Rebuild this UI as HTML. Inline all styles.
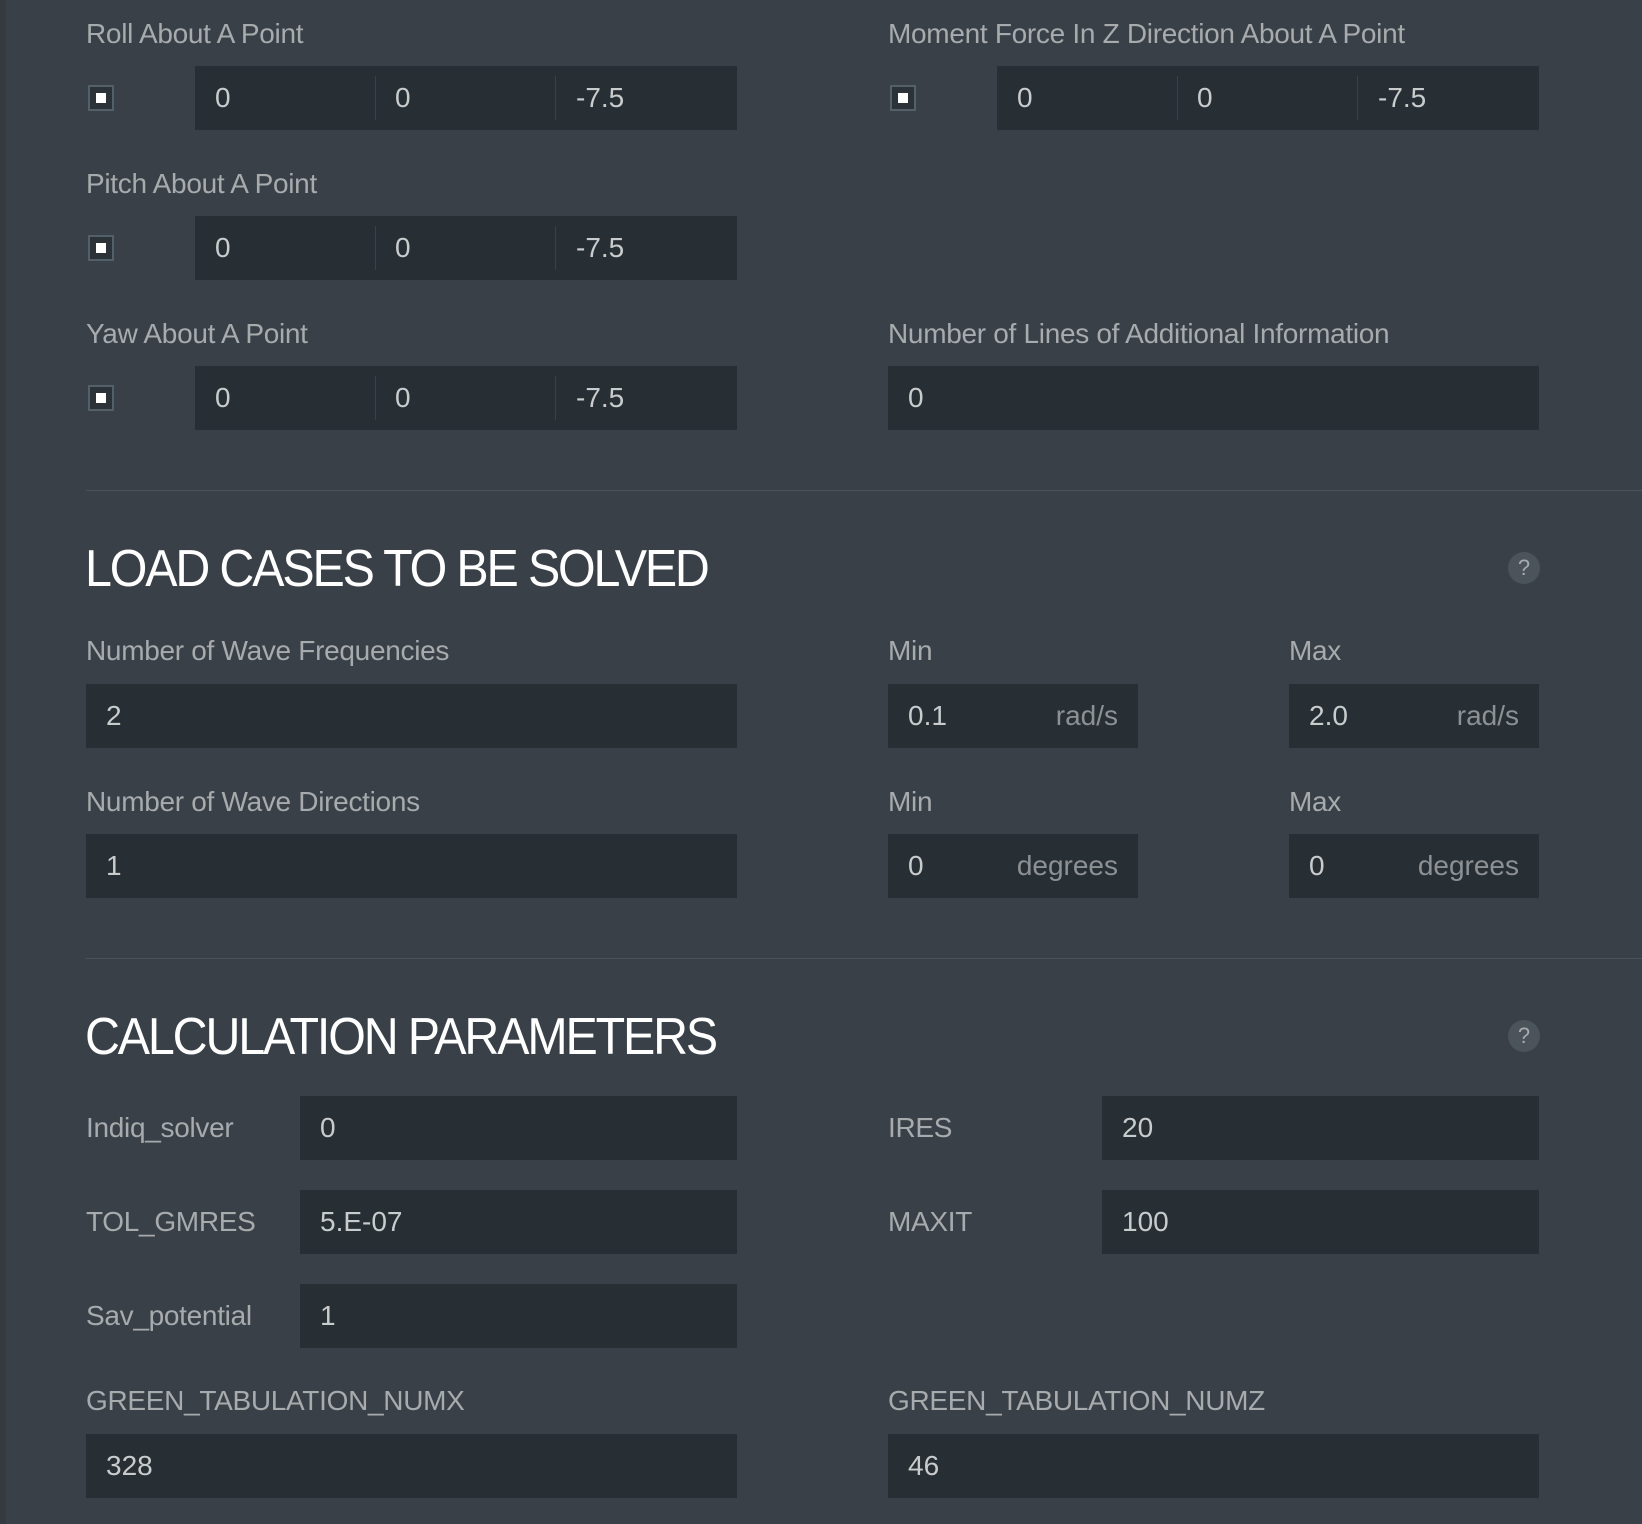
<!DOCTYPE html>
<html><head><meta charset="utf-8"><style>
html,body{margin:0;padding:0}
body{width:1642px;height:1524px;background:#394047;position:relative;overflow:hidden;font-family:"Liberation Sans",Arial,sans-serif}
.strip{position:absolute;left:0;top:0;width:6px;height:1524px;background:#343a40}
.l{position:absolute;color:#a7abae;font-size:28px;line-height:30px;letter-spacing:-0.3px;white-space:nowrap}
.in{position:absolute;background:#272e34;height:64px;color:#c9cccd;font-size:28px;line-height:64px;box-sizing:border-box;padding-left:20px}
.in .u{position:absolute;right:20px;top:0;color:#8d9194}
.sep{position:absolute;top:10px;width:1px;height:44px;background:#3a4249}
.cb{position:absolute;width:26px;height:26px;border:2px solid #53606a;box-sizing:border-box;background:#2b3238}
.cb:after{content:"";position:absolute;left:6px;top:6px;width:10px;height:10px;background:#fff}
.h{position:absolute;left:85px;color:#fff;font-size:52px;line-height:60px;letter-spacing:-2.3px;white-space:nowrap;transform:scaleX(0.93);transform-origin:0 0}
.q{position:absolute;width:32px;height:32px;border-radius:50%;background:#4c545b;color:#a7abae;font-size:22px;line-height:32px;text-align:center}
.hr{position:absolute;left:86px;right:0;height:1px;background:#4c545b}
</style></head><body>
<div class="strip"></div>

<div class="l" style="left:86px;top:19px">Roll About A Point</div>
<div class="cb" style="left:88px;top:85px"></div>
<div class="in" style="left:195px;top:66px;width:542px">0<span style="position:absolute;left:200px">0</span><span style="position:absolute;left:381px">-7.5</span><div class="sep" style="left:180px"></div><div class="sep" style="left:360px"></div></div>

<div class="l" style="left:888px;top:19px">Moment Force In Z Direction About A Point</div>
<div class="cb" style="left:890px;top:85px"></div>
<div class="in" style="left:997px;top:66px;width:542px">0<span style="position:absolute;left:200px">0</span><span style="position:absolute;left:381px">-7.5</span><div class="sep" style="left:180px"></div><div class="sep" style="left:360px"></div></div>

<div class="l" style="left:86px;top:169px">Pitch About A Point</div>
<div class="cb" style="left:88px;top:235px"></div>
<div class="in" style="left:195px;top:216px;width:542px">0<span style="position:absolute;left:200px">0</span><span style="position:absolute;left:381px">-7.5</span><div class="sep" style="left:180px"></div><div class="sep" style="left:360px"></div></div>

<div class="l" style="left:86px;top:319px">Yaw About A Point</div>
<div class="cb" style="left:88px;top:385px"></div>
<div class="in" style="left:195px;top:366px;width:542px">0<span style="position:absolute;left:200px">0</span><span style="position:absolute;left:381px">-7.5</span><div class="sep" style="left:180px"></div><div class="sep" style="left:360px"></div></div>

<div class="l" style="left:888px;top:319px">Number of Lines of Additional Information</div>
<div class="in" style="left:888px;top:366px;width:651px">0</div>

<div class="hr" style="top:490px"></div>
<div class="h" style="top:539px">LOAD CASES TO BE SOLVED</div>
<div class="q" style="left:1508px;top:552px">?</div>

<div class="l" style="left:86px;top:636px">Number of Wave Frequencies</div>
<div class="in" style="left:86px;top:684px;width:651px">2</div>
<div class="l" style="left:888px;top:636px">Min</div>
<div class="in" style="left:888px;top:684px;width:250px">0.1<span class="u">rad/s</span></div>
<div class="l" style="left:1289px;top:636px">Max</div>
<div class="in" style="left:1289px;top:684px;width:250px">2.0<span class="u">rad/s</span></div>

<div class="l" style="left:86px;top:787px">Number of Wave Directions</div>
<div class="in" style="left:86px;top:834px;width:651px">1</div>
<div class="l" style="left:888px;top:787px">Min</div>
<div class="in" style="left:888px;top:834px;width:250px">0<span class="u">degrees</span></div>
<div class="l" style="left:1289px;top:787px">Max</div>
<div class="in" style="left:1289px;top:834px;width:250px">0<span class="u">degrees</span></div>

<div class="hr" style="top:958px"></div>
<div class="h" style="top:1007px">CALCULATION PARAMETERS</div>
<div class="q" style="left:1508px;top:1020px">?</div>

<div class="l" style="left:86px;top:1113px">Indiq_solver</div>
<div class="in" style="left:300px;top:1096px;width:437px">0</div>
<div class="l" style="left:888px;top:1113px">IRES</div>
<div class="in" style="left:1102px;top:1096px;width:437px">20</div>

<div class="l" style="left:86px;top:1207px">TOL_GMRES</div>
<div class="in" style="left:300px;top:1190px;width:437px">5.E-07</div>
<div class="l" style="left:888px;top:1207px">MAXIT</div>
<div class="in" style="left:1102px;top:1190px;width:437px">100</div>

<div class="l" style="left:86px;top:1301px">Sav_potential</div>
<div class="in" style="left:300px;top:1284px;width:437px">1</div>

<div class="l" style="left:86px;top:1386px">GREEN_TABULATION_NUMX</div>
<div class="in" style="left:86px;top:1434px;width:651px">328</div>
<div class="l" style="left:888px;top:1386px">GREEN_TABULATION_NUMZ</div>
<div class="in" style="left:888px;top:1434px;width:651px">46</div>
</body></html>
